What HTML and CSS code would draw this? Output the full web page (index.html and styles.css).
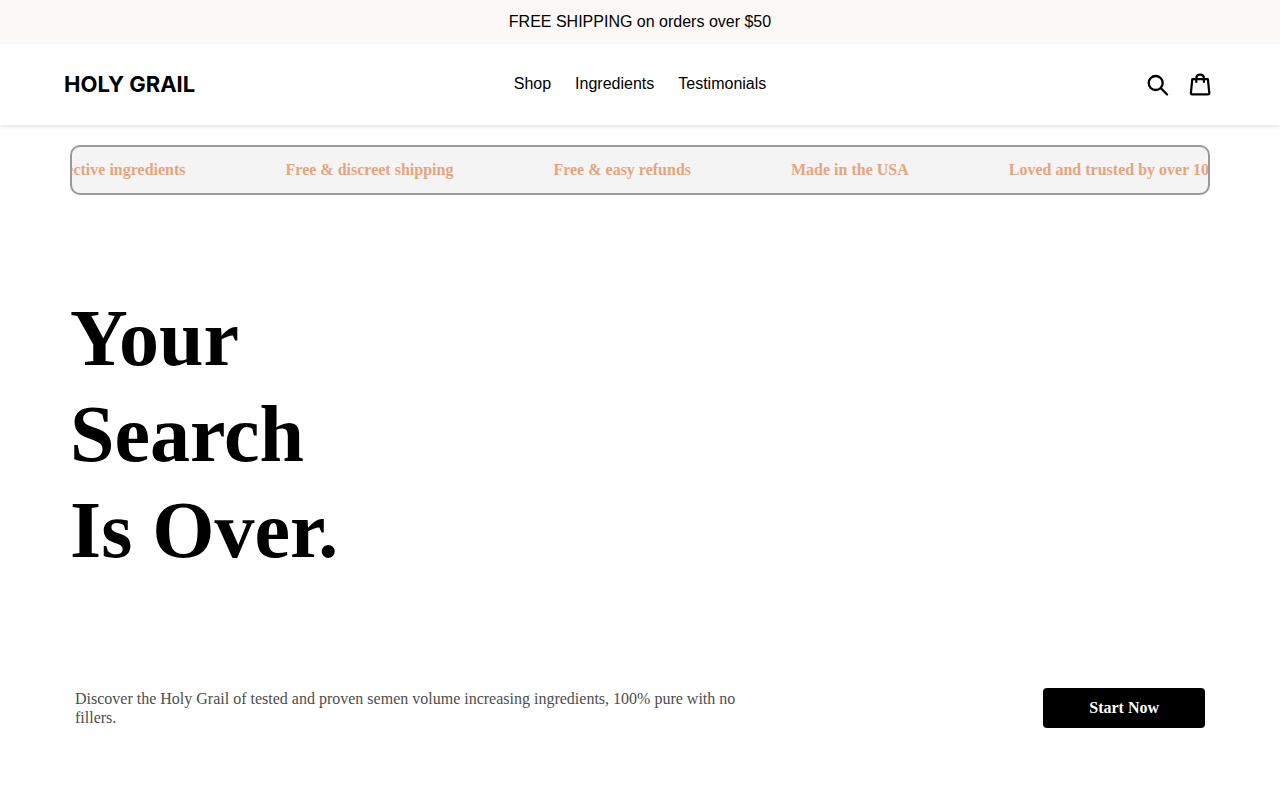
FILE: index.html
```html
<!DOCTYPE html>
<html lang="en">
<head>
    <meta charset="UTF-8">
    <meta name="viewport" content="width=device-width, initial-scale=1.0">
    <title>Holy Grail</title>
    <link rel="stylesheet" href="styles.css">
</head>
<body>
    <div class="announcement">FREE SHIPPING on orders over $50</div>
    <header class="header">
        <a href="#" class="logo">HOLY GRAIL</a>
        <nav class="nav">
            <a href="#shop">Shop</a>
            <a href="#ingredients">Ingredients</a>
            <a href="#testimonials">Testimonials</a>
        </nav>
        <div class="icons">
            <button type="button" class="icon-btn" aria-label="Search">
                <svg width="24" height="24" viewBox="0 0 24 24" fill="none" stroke="#000" stroke-width="2.3" stroke-linecap="round">
                    <circle cx="9.7" cy="10" r="7"/>
                    <path d="M14.9 15.2l6.2 6.3"/>
                </svg>
            </button>
            <button type="button" class="icon-btn" aria-label="Cart">
                <svg width="24" height="24" viewBox="0 0 24 24" fill="none" stroke="#000" stroke-width="2.2" stroke-linecap="round" stroke-linejoin="round">
                    <path d="M4.3 6.1h15.6l1.4 14q.1 1.2-1.1 1.2H4q-1.2 0-1.1-1.2z"/>
                    <path d="M8.3 9V5.6q0-4 3.8-4t3.8 4V9"/>
                </svg>
            </button>
        </div>
    </header>
    <main class="main">
        <div class="ticker">
            <ul class="ticker-track">
                <li>Effective ingredients</li>
                <li>Free &amp; discreet shipping</li>
                <li>Free &amp; easy refunds</li>
                <li>Made in the USA</li>
                <li>Loved and trusted by over 10,000 customers</li>
            </ul>
        </div>
        <h1 class="title">Your<br>Search<br>Is Over.</h1>
        <div class="intro">
            <p class="intro-text">Discover the Holy Grail of tested and proven semen volume increasing ingredients, 100% pure with no fillers.</p>
            <button type="button" class="start-btn">Start Now</button>
        </div>
    </main>
</body>
</html>
```
FILE: styles.css
```css
* {
    box-sizing: border-box;
    margin: 0;
    padding: 0;
}

body {
    background-color: #fff;
    color: #000;
    font-family: "Liberation Serif", "Times New Roman", serif;
    font-size: 16px;
}

.announcement {
    background-color: #fcf8f5;
    padding: 12px;
    text-align: center;
    font-family: "Liberation Sans", Arial, sans-serif;
    line-height: 20px;
}

.header {
    display: grid;
    grid-template-columns: 1fr auto 1fr;
    align-items: start;
    padding: 28px 5%;
    box-shadow: 0 2px 4px rgba(0, 0, 0, 0.1);
}

.logo {
    color: #000;
    font-family: Inter, Arial, sans-serif;
    font-size: 22px;
    font-weight: 700;
    line-height: 25px;
    text-decoration: none;
}

.nav {
    display: flex;
    gap: 24px;
    font-family: "Liberation Sans", Arial, sans-serif;
    line-height: 24px;
}

.nav a {
    color: #000;
    text-decoration: none;
}

.icons {
    display: flex;
    justify-content: flex-end;
    gap: 18px;
    padding: 0 4px;
}

.icon-btn {
    width: 24px;
    padding-top: 1px;
    border: none;
    background: none;
    cursor: pointer;
}

.icon-btn svg {
    display: block;
}

.main {
    padding: 20px 70px;
}

.ticker {
    overflow: hidden;
    border: 2px solid #999;
    border-radius: 10px;
    background-color: #f4f4f4;
}

.ticker-track {
    display: flex;
    gap: 100px;
    margin-left: -27px;
    padding: 13px 0;
    list-style: none;
    white-space: nowrap;
    color: #e9a47c;
    font-weight: bold;
    line-height: 20px;
}

.title {
    margin-top: 95px;
    font-size: 80px;
    line-height: 96px;
}

.intro {
    display: flex;
    justify-content: space-between;
    align-items: center;
    margin-top: 110px;
    padding: 0 5px;
}

.intro-text {
    width: 60%;
    color: #4d4d4d;
    line-height: 19px;
}

.start-btn {
    padding: 10px 46px;
    border: none;
    border-radius: 4px;
    background-color: #000;
    color: #fff;
    font-family: inherit;
    font-size: 16px;
    font-weight: bold;
    line-height: 20px;
    cursor: pointer;
}
```
